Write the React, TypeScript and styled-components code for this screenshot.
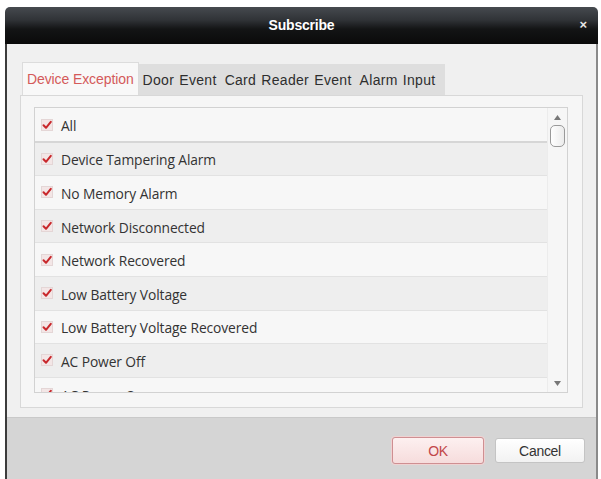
import React from "react";
import styled, { createGlobalStyle } from "styled-components";

const GlobalStyle = createGlobalStyle`
  html, body { margin: 0; padding: 0; background: #ffffff; }
  #root { width: 601px; height: 479px; overflow: hidden; }
`;

const Window = styled.div`
  margin: 7px 0 0 5px;
  width: 593px;
  height: 472px;
  display: flex;
  flex-direction: column;
  font-family: "Liberation Sans", Arial, sans-serif;
`;

const TitleBar = styled.div`
  height: 37px;
  flex: none;
  border-radius: 5px 5px 0 0;
  background: linear-gradient(#464a4f 0%, #303337 35%, #131415 60%, #0a0a0a 100%);
  position: relative;
  display: flex;
  align-items: center;
  justify-content: center;
`;

const Title = styled.span`
  color: #ffffff;
  font-weight: bold;
  font-size: 14px;
  letter-spacing: -0.2px;
  margin-top: -2px;
`;

const Close = styled.span`
  position: absolute;
  right: 11px;
  top: 10px;
  color: #e6e6e6;
  font-size: 13px;
  font-weight: bold;
`;

const Body = styled.div`
  flex: 1;
  min-height: 0;
  display: flex;
  flex-direction: column;
  background: #f0f0f0;
  border-left: 2px solid #3c3c3c;
  border-right: 2px solid #8a8a8a;
`;

const Content = styled.div`
  flex: 1;
  min-height: 0;
  padding: 18px 13px 9px 13px;
  display: flex;
  flex-direction: column;
`;

const TabRow = styled.div`
  height: 33px;
  flex: none;
  display: flex;
  align-items: flex-end;
`;

const Tab = styled.div<{ $active?: boolean }>`
  height: ${(p) => (p.$active ? 33 : 31)}px;
  display: flex;
  align-items: center;
  padding: 0 4px;
  box-sizing: border-box;
  font-size: 14px;
  letter-spacing: ${(p) => (p.$active ? "-0.1px" : "0.3px")};
  word-spacing: ${(p) => (p.$active ? "0" : "1px")};
  color: ${(p) => (p.$active ? "#d45a5a" : "#2e2e2e")};
  background: ${(p) => (p.$active ? "#f8f8f8" : "#dedede")};
  border: ${(p) => (p.$active ? "1px solid #dcdcdc" : "none")};
  border-bottom: none;
  white-space: nowrap;
  &:first-child { margin-left: 2px; }
`;

const TabFill = styled.div`
  width: 6px;
  height: 31px;
  background: #dedede;
`;

const Panel = styled.div`
  flex: 1;
  min-height: 0;
  background: #f6f6f6;
  border: 1px solid #d8d8d8;
  padding: 11px 14px 14px 13px;
  display: flex;
`;

const ListBox = styled.div`
  flex: 1;
  min-height: 0;
  border: 1px solid #d2d2d2;
  background: #f8f8f8;
  display: flex;
  overflow: hidden;
`;

const Rows = styled.div`
  flex: 1;
  overflow: hidden;
  padding-top: 1px;
`;

const Row = styled.div<{ $odd?: boolean; $first?: boolean }>`
  height: 33.6px;
  box-sizing: border-box;
  display: flex;
  align-items: center;
  padding-left: 6px;
  gap: 8px;
  background: ${(p) => (p.$odd ? "#eeeeee" : "#f7f7f7")};
  border-bottom: ${(p) => (p.$first ? "2px solid #d6d6d6" : "1px solid #e2e2e2")};
  font-family: "Open Sans", "Noto Sans", sans-serif;
  font-size: 13.8px;
  color: #333333;
`;

const Label = styled.span`
  letter-spacing: -0.1px;
  margin-top: 2px;
`;

const ScrollBar = styled.div`
  width: 20px;
  flex: none;
  background: #f6f6f6;
  border-left: 1px solid #ececec;
  display: flex;
  flex-direction: column;
  align-items: center;
  padding: 7px 0 6px;
  box-sizing: border-box;
`;

const Thumb = styled.div`
  width: 15px;
  height: 22px;
  margin-top: 5px;
  border: 1px solid #9a9a9a;
  border-radius: 5px;
  background: linear-gradient(90deg, #ffffff, #ececec);
  box-sizing: border-box;
`;

const Spacer = styled.div`
  flex: 1;
`;

const Footer = styled.div`
  height: 62px;
  flex: none;
  background: #d5d5d5;
  border-top: 1px solid #c9c9c9;
  display: flex;
  align-items: flex-start;
  justify-content: flex-end;
  padding: 19px 11px 0 0;
  box-sizing: border-box;
  gap: 11px;
`;

const Button = styled.button<{ $primary?: boolean }>`
  width: ${(p) => (p.$primary ? 92 : 90)}px;
  height: ${(p) => (p.$primary ? 27 : 25)}px;
  margin-top: ${(p) => (p.$primary ? 0 : 1)}px;
  border-radius: 3px;
  font-family: "Liberation Sans", Arial, sans-serif;
  font-size: 14px;
  letter-spacing: -0.3px;
  color: ${(p) => (p.$primary ? "#c2474a" : "#333333")};
  border: 1px solid ${(p) => (p.$primary ? "#cf8f92" : "#c4c4c4")};
  background: ${(p) =>
    p.$primary
      ? "linear-gradient(#fdf0f0, #f6dcdc)"
      : "linear-gradient(#ffffff, #f2f2f2)"};
  box-shadow: ${(p) => (p.$primary ? "0 0 0 1px #efd2d2" : "none")};
  padding: 0;
`;

const Check = () => (
  <svg width="12" height="12" viewBox="0 0 12 12">
    <rect x="0.5" y="0.5" width="11" height="11" fill="#f3e6e6" stroke="#e4d6d6" />
    <path d="M2.5 6.2 L5 8.8 L9.8 2.8" fill="none" stroke="#c8282c" strokeWidth="2" strokeLinecap="round" strokeLinejoin="round" />
  </svg>
);

const Arrow = ({ up }: { up?: boolean }) => (
  <svg width="7" height="5" viewBox="0 0 7 5">
    <path d={up ? "M0 5 L3.5 0 L7 5 Z" : "M0 0 L3.5 5 L7 0 Z"} fill="#777" />
  </svg>
);

const items = [
  "All",
  "Device Tampering Alarm",
  "No Memory Alarm",
  "Network Disconnected",
  "Network Recovered",
  "Low Battery Voltage",
  "Low Battery Voltage Recovered",
  "AC Power Off",
  "AC Power On",
];

export default function App() {
  return (
    <>
      <GlobalStyle />
      <Window>
        <TitleBar>
          <Title>Subscribe</Title>
          <Close>×</Close>
        </TitleBar>
        <Body>
          <Content>
            <TabRow>
              <Tab $active>Device Exception</Tab>
              <Tab>Door Event</Tab>
              <Tab>Card Reader Event</Tab>
              <Tab>Alarm Input</Tab>
              <TabFill />
            </TabRow>
            <Panel>
              <ListBox>
                <Rows>
                  {items.map((t, i) => (
                    <Row key={t} $odd={i % 2 === 1} $first={i === 0}>
                      <Check />
                      <Label>{t}</Label>
                    </Row>
                  ))}
                </Rows>
                <ScrollBar>
                  <Arrow up />
                  <Thumb />
                  <Spacer />
                  <Arrow />
                </ScrollBar>
              </ListBox>
            </Panel>
          </Content>
          <Footer>
            <Button $primary>OK</Button>
            <Button>Cancel</Button>
          </Footer>
        </Body>
      </Window>
    </>
  );
}
